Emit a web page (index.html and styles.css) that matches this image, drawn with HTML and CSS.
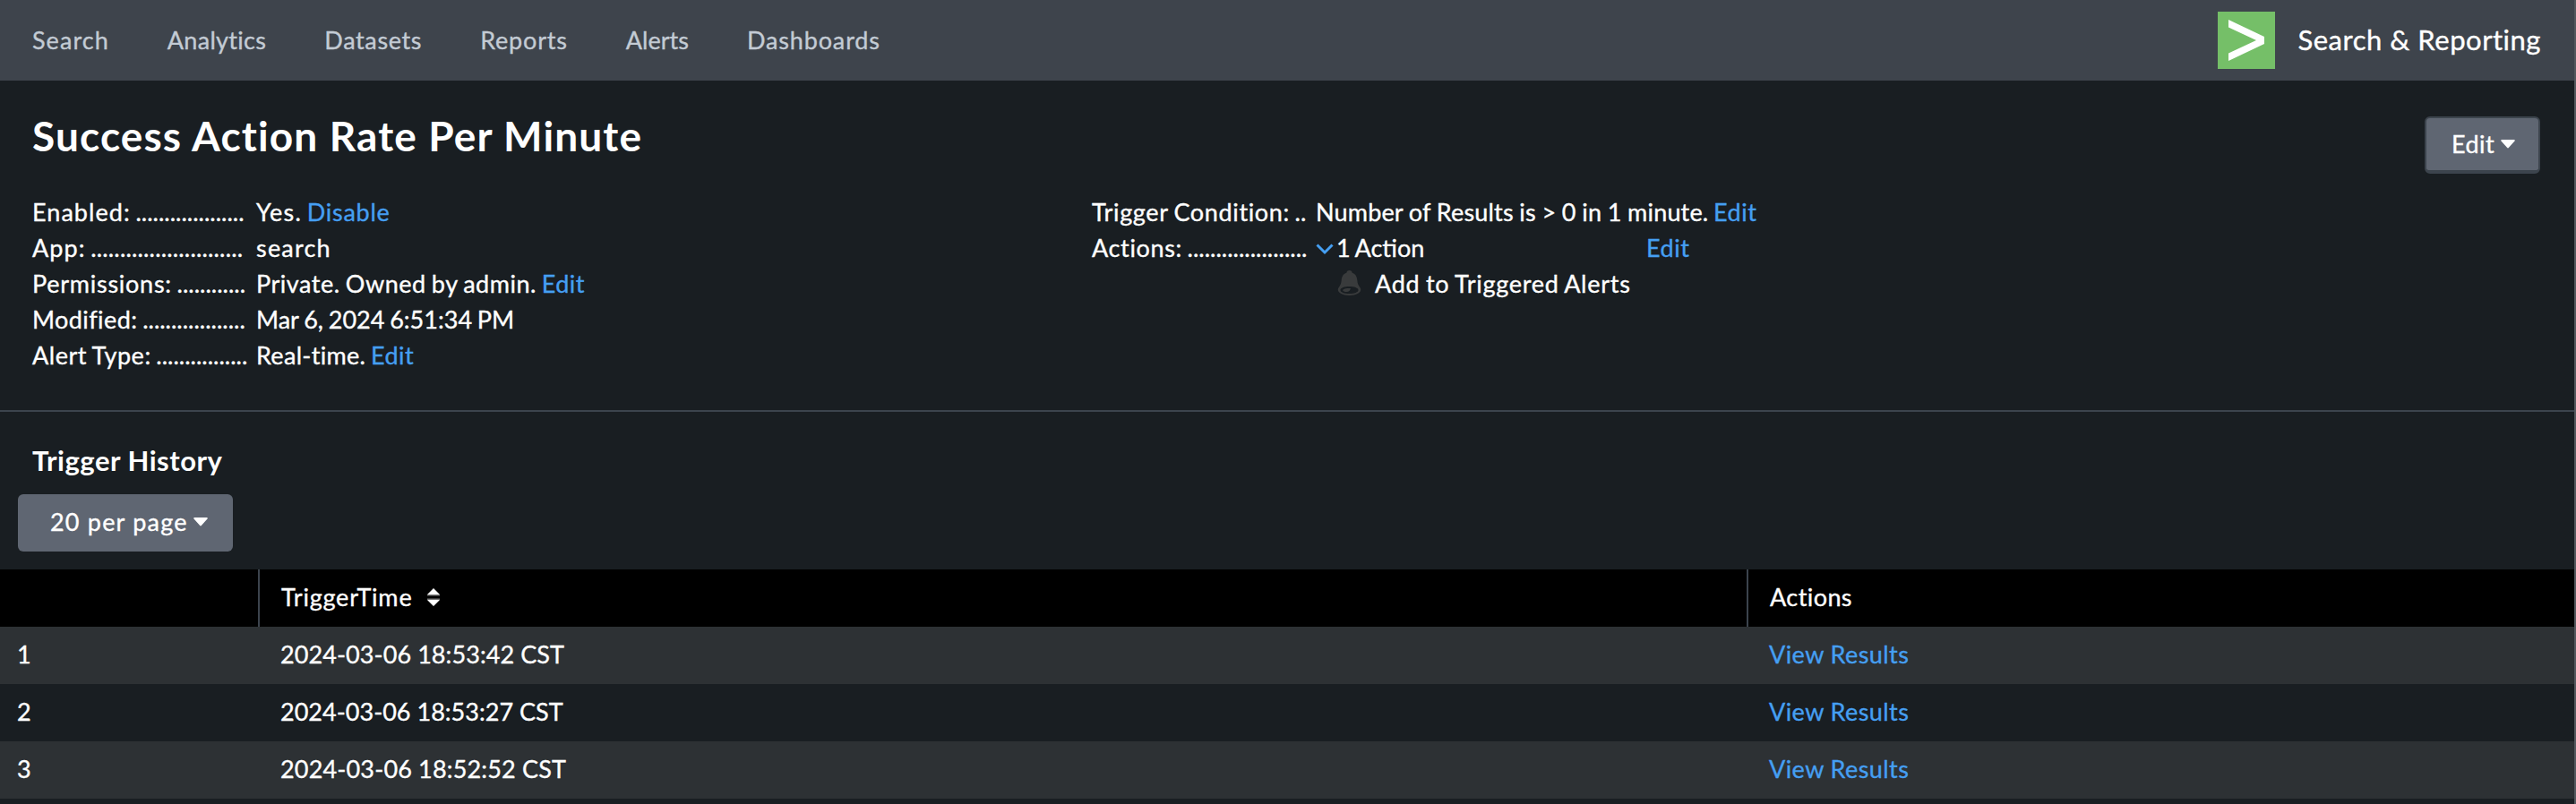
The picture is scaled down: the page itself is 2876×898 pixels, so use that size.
FILE: index.html
```
<!DOCTYPE html>
<html lang="en">
<head>
<meta charset="utf-8">
<title>Success Action Rate Per Minute</title>
<link rel="stylesheet" href="styles.css">
</head>
<body>
<header class="nav">
  <nav class="links">
    <a class="t10">Search</a><a class="t3">Analytics</a><a class="t6">Datasets</a><a class="t8">Reports</a><a class="t0">Alerts</a><a class="t9">Dashboards</a>
  </nav>
  <div class="brand">
    <svg class="logo" viewBox="0 0 64 64"><rect width="64" height="64" fill="#75bf68"/><path d="M12 9 52 28v8L12 55v-8.500L43 32 12 17.500z" fill="#fff"/></svg>
    <span class="app t5">Search &amp; Reporting</span>
  </div>
</header>
<main>
  <section class="summary">
    <div class="title-row">
      <h1>Success Action Rate Per Minute</h1>
      <button class="btn btn-edit"><span class="t4">Edit</span><svg class="caret" viewBox="0 0 16 10"><path d="M1.500 0h13a1 1 0 0 1 .8 1.800L9 8.800a1.300 1.300 0 0 1-2 0L.7 1.800A1 1 0 0 1 1.500 0z"/></svg></button>
    </div>
    <div class="details">
      <dl class="col">
        <dt><span class="t10">Enabled:</span> ...................</dt><dd><span class="t12">Yes.</span> <a class="t7">Disable</a></dd>
        <dt><span class="t10">App:</span> <span class="t2">..........................</span></dt><dd><span class="t12">search</span></dd>
        <dt><span class="t7">Permissions:</span> ............</dt><dd><span class="t5">Private. Owned by admin.</span> <a class="t5">Edit</a></dd>
        <dt><span class="t4">Modified:</span> ..................</dt><dd><span class="t0">Mar 6, 2024 6:51:34 PM</span></dd>
        <dt><span class="t5">Alert Type:</span> ................</dt><dd><span class="t3">Real-time.</span> <a class="t5">Edit</a></dd>
      </dl>
      <dl class="col">
        <dt><span class="t6">Trigger Condition:</span> ..</dt><dd><span class="results t2">Number of Results is &gt; 0 in 1 minute.</span> <a class="t5">Edit</a></dd>
        <dt><span class="t6">Actions:</span> .....................</dt>
        <dd class="action"><svg class="chev" viewBox="0 0 20 13"><path d="M1.500 1.500 10 10l8.500-8.500"/></svg><span class="count">1 Action</span><a class="t5">Edit</a></dd>
        <dt></dt>
        <dd class="alert"><svg class="bell" viewBox="0 0 27 28"><path fill-rule="evenodd" d="M10.500 2.500C10.500 1 11.500 0 13.500 0s3 1 3 2.500C20.500 4 22 7 22.300 11c.3 4 1.200 5.500 3 8 3.200 4.500-2.300 9-11.800 9S-1.500 23.500 1.700 19c1.800-2.500 2.700-4 3-8C5 7 6.500 4 10.500 2.500zM13.500 18C8 18 3.500 19.500 3.500 22s4.500 4 10 4 10-1.500 10-4-4.500-4-10-4z"/><path d="M6.500 21.500c2-1.500 5-1.700 8.500-1.500-.5 2.500-2.500 4.300-5 4-2.500 0-4.500-1-3.500-2.500z"/></svg><span class="t7">Add to Triggered Alerts</span></dd>
      </dl>
    </div>
  </section>
  <section class="history">
    <h2 class="t5">Trigger History</h2>
    <button class="btn btn-page"><span class="t12">20 per page</span><svg class="caret" viewBox="0 0 16 10"><path d="M1.500 0h13a1 1 0 0 1 .8 1.800L9 8.800a1.300 1.300 0 0 1-2 0L.7 1.800A1 1 0 0 1 1.500 0z"/></svg></button>
    <div class="row head"><div></div><div><span class="t8">TriggerTime</span><svg class="sort" viewBox="0 0 16 20"><path fill="#fff" d="M8 0 15 7H1zM1 13h14l-7 7z"/><path fill="#777" d="M1 7h14v1.500H1zM1 11.500h14V13H1z"/></svg></div><div><span class="t4">Actions</span></div></div>
    <div class="row odd"><div>1</div><div><span class="t1">2024-03-06 18:53:42 CST</span></div><div><a class="t4">View Results</a></div></div>
    <div class="row"><div>2</div><div><span class="t0">2024-03-06 18:53:27 CST</span></div><div><a class="t4">View Results</a></div></div>
    <div class="row odd"><div>3</div><div><span class="t2">2024-03-06 18:52:52 CST</span></div><div><a class="t4">View Results</a></div></div>
  </section>
</main>
<div class="edge"></div>
</body>
</html>
```
FILE: styles.css
```
* { box-sizing: border-box; }
body { margin: 0; height: 898px; overflow: hidden; background: #191e22; color: #fff; font: 27px/40px Lato, sans-serif; font-kerning: normal; -webkit-text-stroke: 0.35px; }
a { color: #459ff2; }
span, a { white-space: nowrap; }

/* Tracking steps */
.t0 { letter-spacing: 0.02px; }
.t1 { letter-spacing: 0.08px; }
.t2 { letter-spacing: 0.17px; }
.t3 { letter-spacing: 0.31px; }
.t4 { letter-spacing: 0.42px; }
.t5 { letter-spacing: 0.52px; }
.t6 { letter-spacing: 0.64px; }
.t7 { letter-spacing: 0.74px; }
.t8 { letter-spacing: 0.8px; }
.t9 { letter-spacing: 0.86px; }
.t10 { letter-spacing: 1.05px; }
.t12 { letter-spacing: 1.2px; }

.nav { height: 90px; background: #3e444c; display: flex; justify-content: space-between; align-items: center; padding: 0 39px 0 36px; }
.links { display: flex; gap: 65px; }
.links a { color: #c3cbd4; }
.brand { display: flex; align-items: center; gap: 25px; font-size: 31px; }
.app { padding-bottom: 2px; }
.logo { width: 64px; height: 64px; }
.summary { height: 370px; border-bottom: 2px solid #3c444d; padding: 34px 40px 0 36px; }
.title-row { display: flex; justify-content: space-between; height: 93px; }
h1 { margin: 0; font-size: 46px; line-height: 56px; font-weight: 700; white-space: nowrap; letter-spacing: 1.13px; -webkit-text-stroke: 0; }
.btn { display: flex; align-items: center; border: 0; border-radius: 6px; background: #5f6672; color: #fff; font: inherit; height: 64px; }
.btn-edit { width: 129px; margin-top: 6px; padding: 0 0 0 28px; border: 2px solid #3c444d; border-bottom-width: 4px; }
.caret { width: 16px; height: 10px; fill: #fff; margin-left: 7px; }
.details { display: grid; grid-template-columns: 1183px 1fr; }
.col { margin: 0; display: grid; grid-template-columns: 250px 1fr; grid-auto-rows: 40px; align-content: start; word-spacing: -1.2px; }
dt, dd { margin: 0; white-space: nowrap; }
.results { word-spacing: -0.5px; }
.action { display: flex; }
.chev { width: 20px; height: 13px; margin: 15px 3px 0 0; fill: none; stroke: #459ff2; stroke-width: 3; }
.count { width: 346px; }
.alert { display: flex; padding-left: 24px; }
.bell { width: 27px; height: 28px; margin: 5px 15px 0 0; fill: #393b3c; }
h2 { margin: 0; padding: 34px 0 0 36px; height: 92px; font-size: 31px; font-weight: 700; line-height: 40px; -webkit-text-stroke: 0; }
.btn-page { width: 240px; margin: 0 0 20px 20px; padding: 0 0 3px 36px; }
.btn-page .caret { margin-left: 6px; }
.row { display: grid; grid-template-columns: 288px 1662px 1fr; height: 64px; line-height: 62px; }
.row > div { padding-left: 25px; }
.row > div:first-child { padding-left: 19px; }
.odd { background: #2d3134; }
.head { background: #000; }
.head > div + div { border-left: 2px solid #3c444d; padding-left: 24px; }
.sort { width: 16px; height: 20px; margin-left: 16px; }
.edge { position: absolute; top: 0; right: 0; width: 2px; height: 898px; background: #53585d; }
```
